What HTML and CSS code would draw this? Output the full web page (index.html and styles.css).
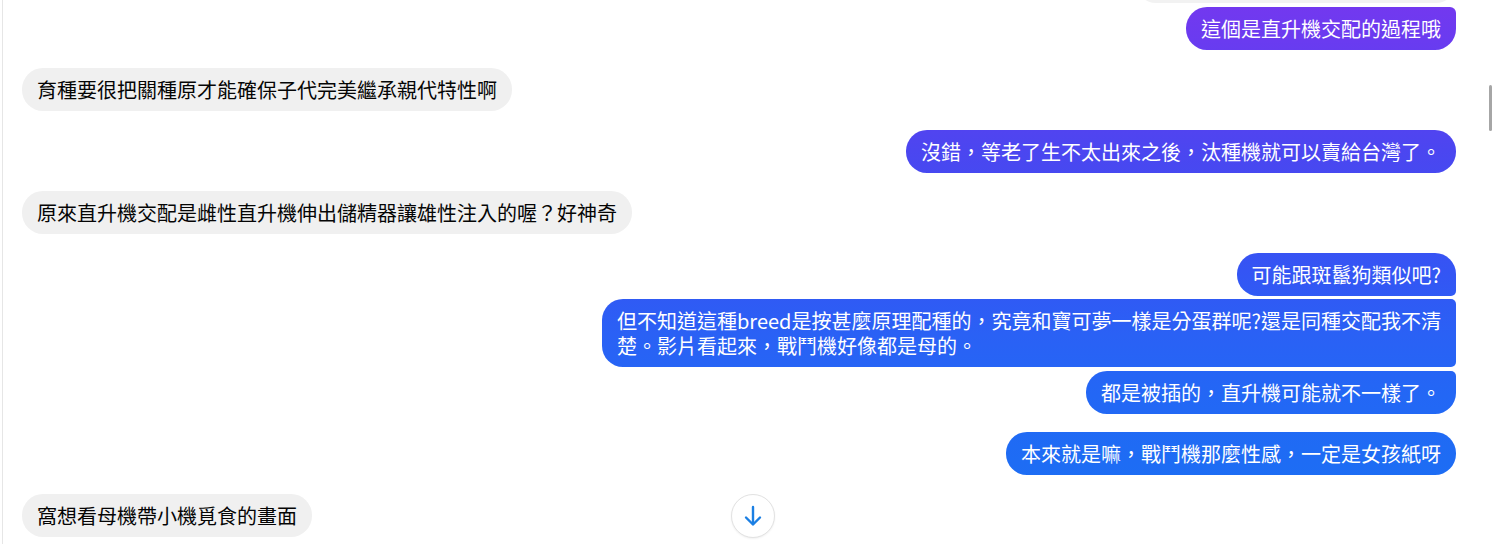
FILE: index.html
```html
<!DOCTYPE html>
<html>
<head>
  <meta charset="utf-8">
  <title>聊天室</title>
  <link rel="stylesheet" href="styles.css">
</head>
<body>
  <div class="chat">
    <div class="row me"><div class="reply-cut"></div></div>
    <div class="row me cont"><div class="bubble out after-reply">這個是直升機交配的過程哦</div></div>

    <div class="row them"><div class="bubble in">育種要很把關種原才能確保子代完美繼承親代特性啊</div></div>

    <div class="row me"><div class="bubble out">沒錯，等老了生不太出來之後，汰種機就可以賣給台灣了。</div></div>

    <div class="row them"><div class="bubble in">原來直升機交配是雌性直升機伸出儲精器讓雄性注入的喔？好神奇</div></div>

    <div class="row me"><div class="bubble out top">可能跟斑鬣狗類似吧?</div></div>
    <div class="row me cont"><div class="bubble out mid">但不知道這種breed是按甚麼原理配種的，究竟和寶可夢一樣是分蛋群呢?還是同種交配我不清楚。影片看起來，戰鬥機好像都是母的。</div></div>
    <div class="row me cont"><div class="bubble out bottom">都是被插的，直升機可能就不一樣了。</div></div>

    <div class="row me"><div class="bubble out">本來就是嘛，戰鬥機那麼性感，一定是女孩紙呀</div></div>

    <div class="row them"><div class="bubble in">窩想看母機帶小機覓食的畫面</div></div>
  </div>

  <button class="scroll-down" aria-label="捲動到最新訊息">
    <svg width="22" height="24" viewBox="0 0 22 24" fill="none" stroke="#1b7fe3" stroke-width="2.4" stroke-linecap="round" stroke-linejoin="round">
      <path d="M11 3 V20"/>
      <path d="M4 13.5 L11 20.5 L18 13.5"/>
    </svg>
  </button>
  <div class="scroll-thumb"></div>
</body>
</html>
```

FILE: styles.css
```css
html,
body {
  margin: 0;
  height: 100%;
  overflow: hidden;
  background-color: #ffffff;
}

body {
  font-family: "Noto Sans CJK TC", "Noto Sans", sans-serif;
  font-size: 20px;
  color: #050505;
}

.chat {
  margin-left: 2px;
  height: 100%;
  border-left: 1px solid #e6e6e6;
  padding: 0 40px 0 19px;
  display: flex;
  flex-direction: column;
}

.row {
  display: flex;
  margin-top: 18.5px;
}

.row.me {
  justify-content: flex-end;
}

.row.them {
  justify-content: flex-start;
}

.row.cont {
  margin-top: 3.5px;
}

.row:first-child {
  margin-top: 0;
}

.reply-cut {
  width: 320px;
  height: 43px;
  margin-top: -40px;
  border-radius: 0 0 20px 20px;
  background-color: #f2f2f2;
}

.bubble {
  box-sizing: border-box;
  max-width: 854px;
  padding: 9px 15px;
  line-height: 25px;
  border-radius: 21px;
  white-space: normal;
}

.bubble.in {
  background-color: #f0f0f0;
  color: #050505;
}

.bubble.out {
  color: #ffffff;
  background: linear-gradient(to bottom, #7438ef 0px, #6a3bf0 40px, #4b46f0 150px, #3455f4 270px, #2a61f5 335px, #2367f5 395px, #1e6cf4 460px, #1a70f4 544px) fixed;
}

.bubble.after-reply {
  border-top-right-radius: 6px;
}

.bubble.top {
  border-bottom-right-radius: 5px;
}

.bubble.mid {
  border-top-right-radius: 5px;
  border-bottom-right-radius: 5px;
}

.bubble.bottom {
  border-top-right-radius: 5px;
}

.scroll-down {
  position: absolute;
  left: 731px;
  top: 494px;
  width: 44px;
  height: 44px;
  padding: 0;
  border: 1px solid #e2e2e2;
  border-radius: 50%;
  background-color: #ffffff;
  box-shadow: 0 1px 2px rgba(0, 0, 0, 0.06);
  display: flex;
  align-items: center;
  justify-content: center;
  cursor: pointer;
}

.scroll-thumb {
  position: absolute;
  left: 1489px;
  top: 85px;
  width: 3px;
  height: 46px;
  border-radius: 2px;
  background-color: #a6a6a6;
}
```
